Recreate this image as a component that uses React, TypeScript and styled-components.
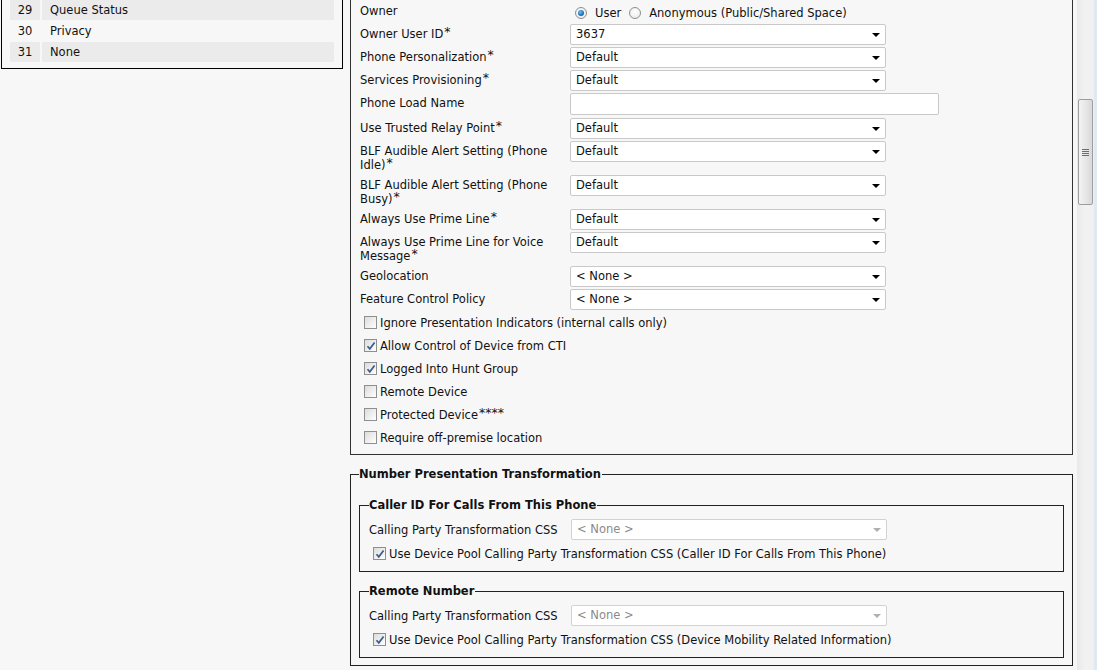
import React from 'react'
import styled, { createGlobalStyle, css } from 'styled-components'

const GlobalStyle = createGlobalStyle`
  html, body {
    margin: 0;
    padding: 0;
    background: #f7f7f7;
    overflow: hidden;
  }
  body {
    font-family: "DejaVu Sans", Verdana, sans-serif;
    font-size: 11.5px;
    color: #111;
  }
`

const Page = styled.div`
  display: flex;
  align-items: flex-start;
  width: 1097px;
  height: 670px;
  overflow: hidden;
`

const LeftColumn = styled.div`
  width: 342px;
  margin-left: 1px;
  flex-shrink: 0;
`

const ListBox = styled.div`
  border: 1px solid #000;
  border-top: none;
  padding: 0 8px 7px 8px;
  display: flex;
  flex-direction: column;
  gap: 2px;
`

const ListRow = styled.div<{ $shaded: boolean }>`
  display: grid;
  grid-template-columns: 30px 1fr;
  gap: 2px;
  height: 19px;
  line-height: 20px;

  & > span {
    background: ${({ $shaded }) => ($shaded ? '#ebebeb' : 'transparent')};
  }
`

const NumCell = styled.span`
  text-align: center;
`

const NameCell = styled.span`
  padding-left: 8px;
`

const RightColumn = styled.div`
  width: 723px;
  margin-left: 7px;
  flex-shrink: 0;
`

const MainBox = styled.div`
  border: 1px solid #333;
  border-top: none;
  padding: 1px 9px 6px 9px;
`

const FieldRow = styled.div`
  display: grid;
  grid-template-columns: 210px auto;
  align-items: start;
  margin-bottom: 2px;
`

const Label = styled.div`
  padding: 3px 8px 1px 0;
  line-height: 14px;
`

const Star = styled.span`
  display: inline-block;
  font-size: 12.5px;
  line-height: 9px;
  height: 9px;
  overflow: visible;
  vertical-align: top;
  margin-left: 1px;
`

const SelectBox = styled.div<{ $disabled?: boolean; $width?: number }>`
  position: relative;
  width: ${({ $width }) => $width ?? 316}px;
  height: 21px;
  box-sizing: border-box;
  border: 1px solid #c9c9c9;
  border-radius: 2px;
  background: #fff;
  line-height: 19px;
  padding-left: 5px;
  color: #111;

  &::after {
    content: '';
    position: absolute;
    right: 5px;
    top: 8px;
    border-left: 4px solid transparent;
    border-right: 4px solid transparent;
    border-top: 4px solid #000;
  }

  ${({ $disabled }) =>
    $disabled &&
    css`
      color: #8a8a8a;
      border-color: #d2d2d2;
      &::after {
        border-top-color: #b0b0b0;
      }
    `}
`

const TextInput = styled.div`
  width: 369px;
  height: 22px;
  box-sizing: border-box;
  border: 1px solid #c9c9c9;
  border-radius: 2px;
  background: #fff;
  margin-bottom: 1px;
`

const RadioGroup = styled.div`
  display: flex;
  align-items: center;
  box-sizing: border-box;
  height: 21px;
  padding-left: 5px;
  padding-top: 3px;
`

const RadioDot = styled.span<{ $on: boolean }>`
  width: 12px;
  height: 12px;
  border-radius: 50%;
  box-sizing: border-box;
  border: 1px solid #8e8f8f;
  background: radial-gradient(circle at 50% 40%, #fff 0%, #e6e6e6 100%);
  margin-right: 8px;
  display: inline-flex;
  align-items: center;
  justify-content: center;

  ${({ $on }) =>
    $on &&
    css`
      &::after {
        content: '';
        width: 6px;
        height: 6px;
        border-radius: 50%;
        background: radial-gradient(circle at 40% 35%, #6fc1f3 0%, #1a6fb8 60%, #0b3f75 100%);
      }
    `}
`

const RadioText = styled.span`
  margin-right: 8px;
`

const CheckList = styled.div`
  margin-top: 1px;
`

const CheckRow = styled.div<{ $indent?: number }>`
  display: flex;
  align-items: center;
  height: 21px;
  margin-bottom: 2px;
  padding-left: ${({ $indent }) => $indent ?? 4}px;
  &:last-child {
    margin-bottom: 0;
  }
`

const CheckBox = styled.span<{ $on: boolean }>`
  width: 13px;
  height: 13px;
  box-sizing: border-box;
  border: 1px solid #8f8f8f;
  background: linear-gradient(135deg, #dcdcdc 0%, #f4f4f4 70%, #fff 100%);
  margin-right: 3px;
  display: inline-flex;
  align-items: center;
  justify-content: center;
  flex-shrink: 0;

  svg {
    display: ${({ $on }) => ($on ? 'block' : 'none')};
  }
`

const Fieldset = styled.fieldset<{ $inner?: boolean }>`
  margin: ${({ $inner }) => ($inner ? '17px 0 0 0' : '12px 0 0 0')};
  border: 1px solid #222;
  padding: ${({ $inner }) => ($inner ? '7px 9px 7px 9px' : '0 8px 7px 8px')};
  min-width: 0;

  & + & {
    margin-top: 12px;
  }
`

const Legend = styled.legend`
  font-weight: bold;
  padding: 0 1px 0 0;
  line-height: 14px;
  color: #111;
`

const CssRow = styled.div`
  display: grid;
  grid-template-columns: 202px auto;
  align-items: center;
  height: 21px;
  margin-bottom: 3px;
`

const Scrollbar = styled.div`
  width: 20px;
  height: 670px;
  margin-left: 4px;
  flex-shrink: 0;
  box-sizing: border-box;
  background: linear-gradient(90deg, #e9e9e9 0%, #f2f2f2 40%, #f0f0f0 85%, #dfe9f3 86%, #dfe9f3 100%);
  padding-top: 99px;
  padding-left: 1px;
`

const Thumb = styled.div`
  width: 15px;
  height: 106px;
  box-sizing: border-box;
  border: 1px solid #9d9d9d;
  border-radius: 2px;
  background: linear-gradient(90deg, #f3f3f3 0%, #e7e7e7 50%, #d9d9d9 100%);
  display: flex;
  flex-direction: column;
  align-items: center;
  justify-content: center;
  gap: 1px;

  span {
    width: 7px;
    height: 1px;
    background: #6e6e6e;
  }
`

const Check = () => (
  <svg width="10" height="10" viewBox="0 0 10 10">
    <path d="M1.5 5.2 L3.8 7.8 L8.6 1.4" fill="none" stroke="#3b5c8c" strokeWidth="1.7" />
  </svg>
)

const listItems = [
  { n: 29, name: 'Queue Status' },
  { n: 30, name: 'Privacy' },
  { n: 31, name: 'None' },
]

type Field = { label: React.ReactNode; value?: string; kind?: 'select' | 'text' }

const fields: Field[] = [
  { label: <>Owner User ID<Star>*</Star></>, value: '3637' },
  { label: <>Phone Personalization<Star>*</Star></>, value: 'Default' },
  { label: <>Services Provisioning<Star>*</Star></>, value: 'Default' },
  { label: 'Phone Load Name', kind: 'text' },
  { label: <>Use Trusted Relay Point<Star>*</Star></>, value: 'Default' },
  { label: <>BLF Audible Alert Setting (Phone Idle)<Star>*</Star></>, value: 'Default' },
  { label: <>BLF Audible Alert Setting (Phone Busy)<Star>*</Star></>, value: 'Default' },
  { label: <>Always Use Prime Line<Star>*</Star></>, value: 'Default' },
  { label: <>Always Use Prime Line for Voice Message<Star>*</Star></>, value: 'Default' },
  { label: 'Geolocation', value: '< None >' },
  { label: 'Feature Control Policy', value: '< None >' },
]

const checks: { label: React.ReactNode; on: boolean }[] = [
  { label: 'Ignore Presentation Indicators (internal calls only)', on: false },
  { label: 'Allow Control of Device from CTI', on: true },
  { label: 'Logged Into Hunt Group', on: true },
  { label: 'Remote Device', on: false },
  { label: <>Protected Device<Star>****</Star></>, on: false },
  { label: 'Require off-premise location', on: false },
]

export default function App() {
  return (
    <Page>
      <GlobalStyle />
      <LeftColumn>
        <ListBox>
          {listItems.map((it) => (
            <ListRow key={it.n} $shaded={it.n % 2 === 1}>
              <NumCell>{it.n}</NumCell>
              <NameCell>{it.name}</NameCell>
            </ListRow>
          ))}
        </ListBox>
      </LeftColumn>

      <RightColumn>
        <MainBox>
          <FieldRow>
            <Label>Owner</Label>
            <RadioGroup>
              <RadioDot $on />
              <RadioText>User</RadioText>
              <RadioDot $on={false} />
              <RadioText>Anonymous (Public/Shared Space)</RadioText>
            </RadioGroup>
          </FieldRow>
          {fields.map((f, i) => (
            <FieldRow key={i}>
              <Label>{f.label}</Label>
              {f.kind === 'text' ? <TextInput /> : <SelectBox>{f.value}</SelectBox>}
            </FieldRow>
          ))}
          <CheckList>
            {checks.map((c, i) => (
              <CheckRow key={i}>
                <CheckBox $on={c.on}>
                  <Check />
                </CheckBox>
                <span>{c.label}</span>
              </CheckRow>
            ))}
          </CheckList>
        </MainBox>

        <Fieldset>
          <Legend>Number Presentation Transformation</Legend>
          <Fieldset $inner>
            <Legend>Caller ID For Calls From This Phone</Legend>
            <CssRow>
              <span>Calling Party Transformation CSS</span>
              <SelectBox $disabled>&lt; None &gt;</SelectBox>
            </CssRow>
            <CheckRow $indent={4}>
              <CheckBox $on>
                <Check />
              </CheckBox>
              <span>Use Device Pool Calling Party Transformation CSS (Caller ID For Calls From This Phone)</span>
            </CheckRow>
          </Fieldset>
          <Fieldset $inner>
            <Legend>Remote Number</Legend>
            <CssRow>
              <span>Calling Party Transformation CSS</span>
              <SelectBox $disabled>&lt; None &gt;</SelectBox>
            </CssRow>
            <CheckRow $indent={4}>
              <CheckBox $on>
                <Check />
              </CheckBox>
              <span>Use Device Pool Calling Party Transformation CSS (Device Mobility Related Information)</span>
            </CheckRow>
          </Fieldset>
        </Fieldset>
      </RightColumn>

      <Scrollbar>
        <Thumb>
          <span />
          <span />
          <span />
          <span />
        </Thumb>
      </Scrollbar>
    </Page>
  )
}
